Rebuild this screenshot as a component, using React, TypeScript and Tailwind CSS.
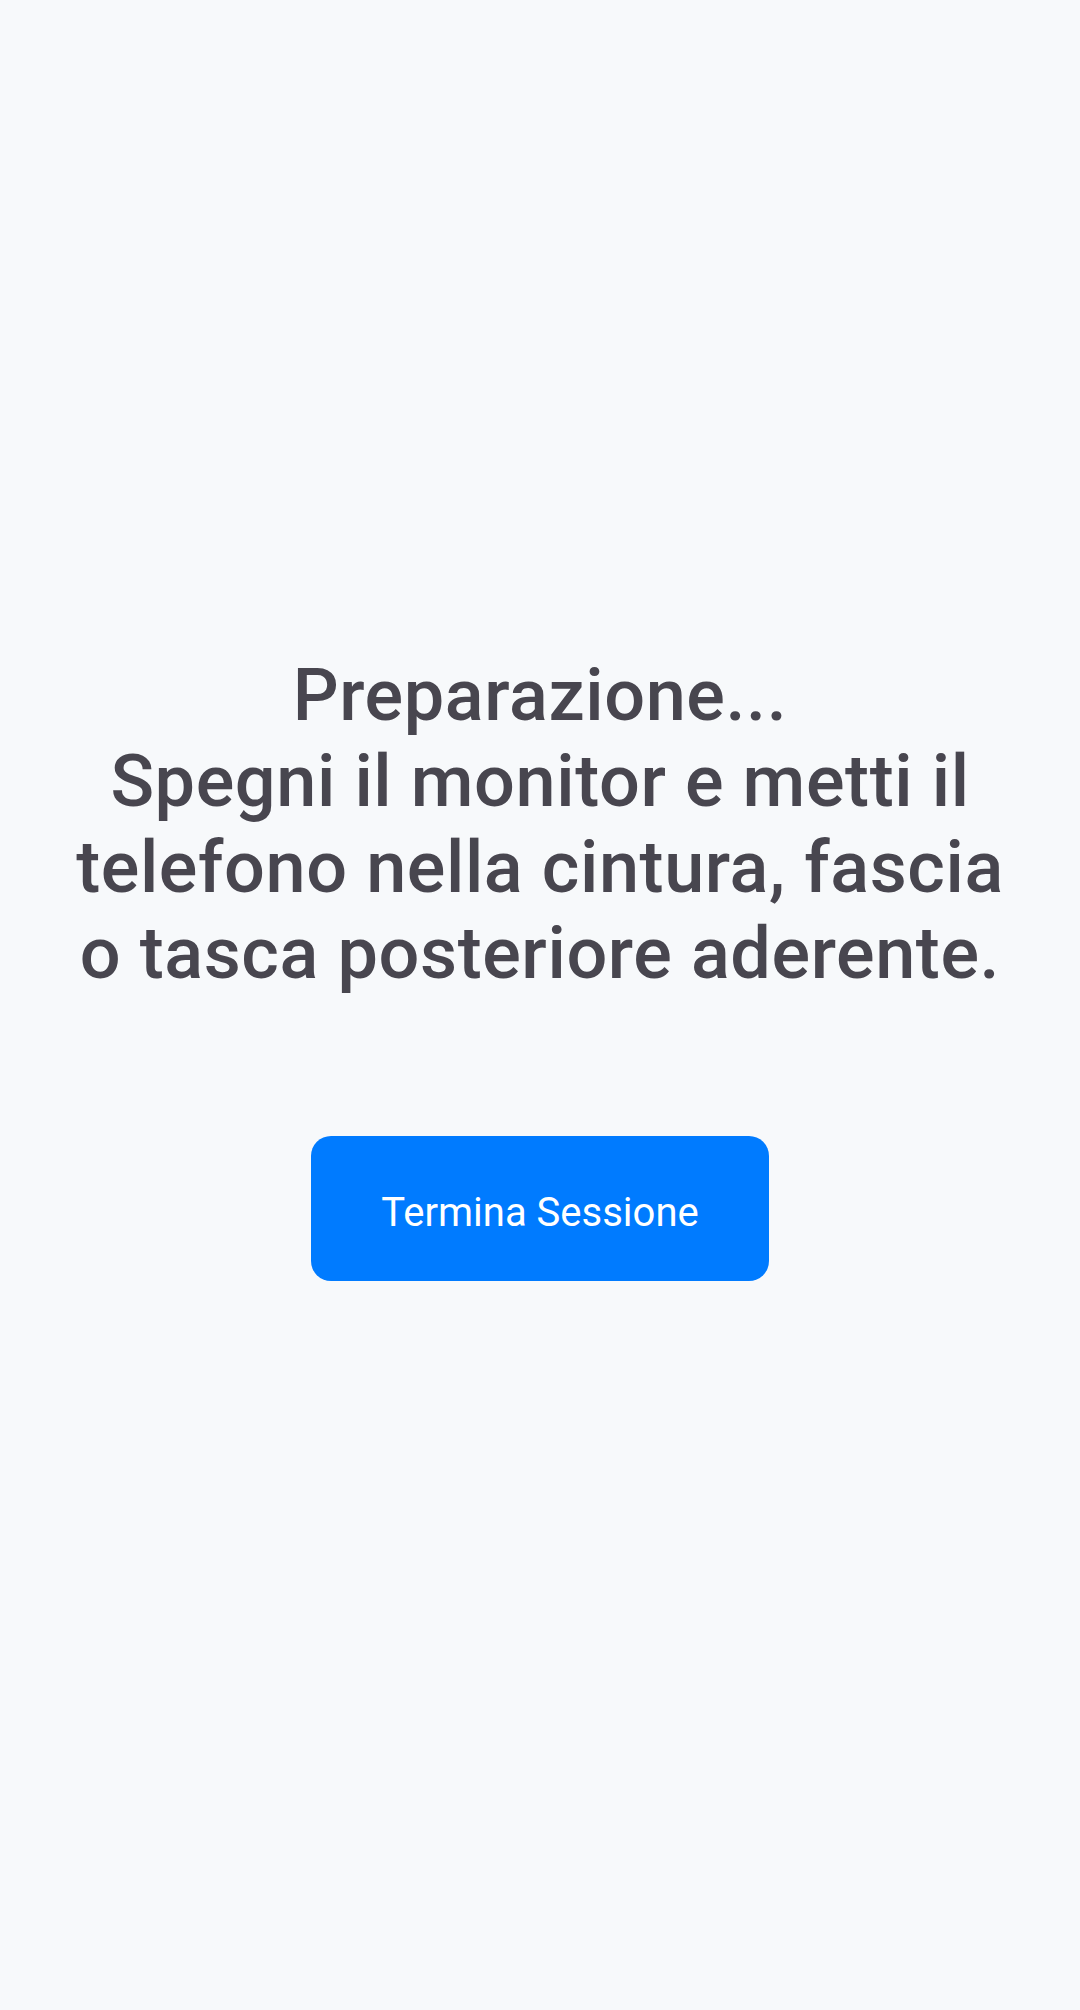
export default function App() {
  return (
    <div
      className="min-h-[2010px] w-full bg-[#f7f9fb] flex flex-col items-center pt-[653px]"
      style={{ fontFamily: 'Roboto, "Noto Sans", sans-serif' }}
    >
      {/* stato di preparazione */}
      <h1 className="text-[72px] leading-[86px] font-medium text-[#48464f] text-center tracking-[0.6px]">
        Preparazione...
        <br />
        Spegni il monitor e metti il
        <br />
        telefono nella cintura, fascia
        <br />
        o tasca posteriore aderente.
      </h1>

      <button className="mt-[139px] w-[458px] h-[145px] rounded-[20px] bg-[#007bff] text-white text-[40px] pt-[8px] flex items-center justify-center">
        Termina Sessione
      </button>
    </div>
  )
}
